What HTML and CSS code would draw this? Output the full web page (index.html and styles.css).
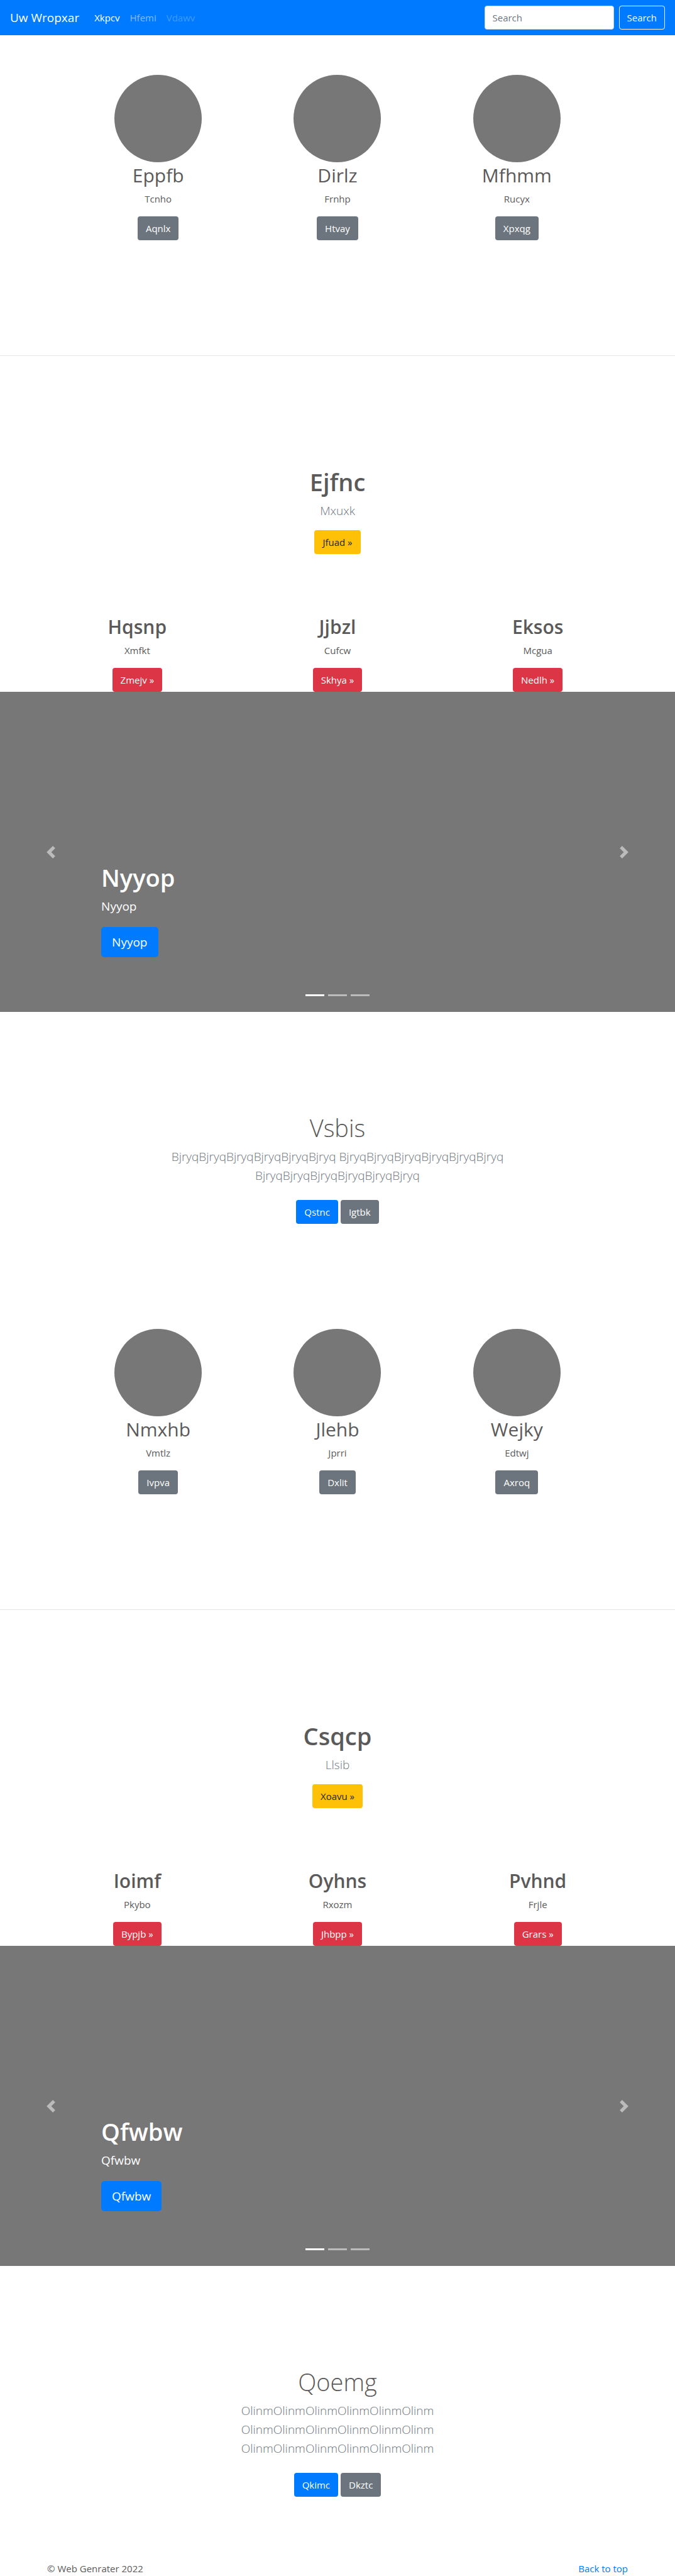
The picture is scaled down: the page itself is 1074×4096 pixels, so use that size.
FILE: index.html
```html
<!DOCTYPE html>
<html lang="en">
<head>
<meta charset="utf-8">
<meta name="viewport" content="width=device-width, initial-scale=1">
<title>Uw Wropxar</title>
<link rel="stylesheet" href="styles.css">
</head>
<body id="top">
<header class="navbar">
  <a class="brand" href="#top">Uw Wropxar</a>
  <nav class="nav">
    <a class="nav-link active" href="#">Xkpcv</a>
    <a class="nav-link" href="#">Hfemi</a>
    <a class="nav-link disabled" href="#" aria-disabled="true">Vdawv</a>
  </nav>
  <form class="search">
    <input class="field" type="search" placeholder="Search" aria-label="Search">
    <button class="btn btn-outline" type="button">Search</button>
  </form>
</header>
<main>
  <section class="profiles">
    <article class="column"><div class="avatar"></div><h2 class="title">Eppfb</h2><p class="text">Tcnho</p><a class="btn btn-secondary" href="#">Aqnlx</a></article>
    <article class="column"><div class="avatar"></div><h2 class="title">Dirlz</h2><p class="text">Frnhp</p><a class="btn btn-secondary" href="#">Htvay</a></article>
    <article class="column"><div class="avatar"></div><h2 class="title">Mfhmm</h2><p class="text">Rucyx</p><a class="btn btn-secondary" href="#">Xpxqg</a></article>
  </section>
  <hr class="divider">
  <section class="intro">
    <h1 class="headline">Ejfnc</h1>
    <p class="lead">Mxuxk</p>
    <a class="btn btn-warning" href="#">Jfuad »</a>
  </section>
  <section class="features">
    <article class="column"><h2 class="title strong">Hqsnp</h2><p class="text">Xmfkt</p><a class="btn btn-danger" href="#">Zmejv »</a></article>
    <article class="column"><h2 class="title strong">Jjbzl</h2><p class="text">Cufcw</p><a class="btn btn-danger" href="#">Skhya »</a></article>
    <article class="column"><h2 class="title strong">Eksos</h2><p class="text">Mcgua</p><a class="btn btn-danger" href="#">Nedlh »</a></article>
  </section>
  <section class="carousel">
    <button class="control prev" type="button" aria-label="Previous"><svg class="chevron" viewBox="0 0 8 8"><path d="M5.25 0l-4 4 4 4 1.5-1.5L4.25 4l2.5-2.5L5.25 0z"/></svg></button>
    <div class="caption">
      <h1 class="headline">Nyyop</h1>
      <p class="caption-text">Nyyop</p>
      <a class="btn btn-primary btn-large" href="#">Nyyop</a>
    </div>
    <div class="indicators"><span class="bar current"></span><span class="bar"></span><span class="bar"></span></div>
    <button class="control next" type="button" aria-label="Next"><svg class="chevron" viewBox="0 0 8 8"><path d="M2.75 0l-1.5 1.5L3.75 4l-2.5 2.5L2.75 8l4-4-4-4z"/></svg></button>
  </section>
  <section class="album">
    <h1 class="headline light">Vsbis</h1>
    <p class="lead">BjryqBjryqBjryqBjryqBjryqBjryq BjryqBjryqBjryqBjryqBjryqBjryq BjryqBjryqBjryqBjryqBjryqBjryq</p>
    <div class="actions"><a class="btn btn-primary" href="#">Qstnc</a><a class="btn btn-secondary" href="#">Igtbk</a></div>
  </section>
  <section class="profiles after-album">
    <article class="column"><div class="avatar"></div><h2 class="title">Nmxhb</h2><p class="text">Vmtlz</p><a class="btn btn-secondary" href="#">Ivpva</a></article>
    <article class="column"><div class="avatar"></div><h2 class="title">Jlehb</h2><p class="text">Jprri</p><a class="btn btn-secondary" href="#">Dxlit</a></article>
    <article class="column"><div class="avatar"></div><h2 class="title">Wejky</h2><p class="text">Edtwj</p><a class="btn btn-secondary" href="#">Axroq</a></article>
  </section>
  <hr class="divider">
  <section class="intro">
    <h1 class="headline">Csqcp</h1>
    <p class="lead">Llsib</p>
    <a class="btn btn-warning" href="#">Xoavu »</a>
  </section>
  <section class="features">
    <article class="column"><h2 class="title strong">Ioimf</h2><p class="text">Pkybo</p><a class="btn btn-danger" href="#">Bypjb »</a></article>
    <article class="column"><h2 class="title strong">Oyhns</h2><p class="text">Rxozm</p><a class="btn btn-danger" href="#">Jhbpp »</a></article>
    <article class="column"><h2 class="title strong">Pvhnd</h2><p class="text">Frjle</p><a class="btn btn-danger" href="#">Grars »</a></article>
  </section>
  <section class="carousel">
    <button class="control prev" type="button" aria-label="Previous"><svg class="chevron" viewBox="0 0 8 8"><path d="M5.25 0l-4 4 4 4 1.5-1.5L4.25 4l2.5-2.5L5.25 0z"/></svg></button>
    <div class="caption">
      <h1 class="headline">Qfwbw</h1>
      <p class="caption-text">Qfwbw</p>
      <a class="btn btn-primary btn-large" href="#">Qfwbw</a>
    </div>
    <div class="indicators"><span class="bar current"></span><span class="bar"></span><span class="bar"></span></div>
    <button class="control next" type="button" aria-label="Next"><svg class="chevron" viewBox="0 0 8 8"><path d="M2.75 0l-1.5 1.5L3.75 4l-2.5 2.5L2.75 8l4-4-4-4z"/></svg></button>
  </section>
  <section class="album">
    <h1 class="headline light">Qoemg</h1>
    <p class="lead">OlinmOlinmOlinmOlinmOlinmOlinm OlinmOlinmOlinmOlinmOlinmOlinm OlinmOlinmOlinmOlinmOlinmOlinm</p>
    <div class="actions"><a class="btn btn-primary" href="#">Qkimc</a><a class="btn btn-secondary" href="#">Dkztc</a></div>
  </section>
</main>
<footer class="footer">
  <span>© Web Genrater 2022</span>
  <a class="footer-link" href="#top">Back to top</a>
</footer>
</body>
</html>
```

FILE: styles.css
```css
*, *::before, *::after { box-sizing: border-box; }

body {
  margin: 0;
  background: #fff;
  color: #5a5a5a;
  font: 400 15px/24px "Open Sans", "Noto Sans", sans-serif;
}

h1, h2, p { margin: 0; }
a { text-decoration: none; }

/* Top bar */
.navbar {
  display: flex;
  align-items: center;
  padding: 9px 16px;
  background: #007bff;
}
.brand { margin-right: 16px; color: #fff; font-size: 19px; line-height: 30px; }
.nav { display: flex; flex: 1; }
.nav-link { padding: 0 8px; color: rgba(255, 255, 255, .5); }
.nav-link.active { color: #fff; }
.nav-link.disabled { color: rgba(255, 255, 255, .25); }
.search { display: flex; gap: 8px; }
.field {
  width: 206px;
  height: 38px;
  padding: 6px 12px;
  border: 1px solid #ced4da;
  border-radius: 4px;
  background: #fff;
  color: #495057;
  font: inherit;
  appearance: none;
}
.field::placeholder { color: #6c757d; opacity: 1; }

/* Buttons */
.btn {
  display: inline-block;
  padding: 6px 12px;
  border: 1px solid transparent;
  border-radius: 4px;
  color: #fff;
  font: inherit;
  text-align: center;
}
.btn-outline { border-color: #f8f9fa; background: transparent; color: #f8f9fa; }
.btn-primary { background: #007bff; }
.btn-secondary { background: #6c757d; }
.btn-danger { background: #dc3545; }
.btn-warning { background: #ffc107; color: #212529; }
.btn-large { padding: 8px 16px; border-radius: 5px; font-size: 19px; line-height: 30px; }

/* Headings and text */
.headline { font-size: 38px; font-weight: 600; line-height: 46px; }
.headline.light { font-weight: 300; }
.title { font-size: 30px; font-weight: 400; line-height: 36px; }
.title.strong { font-weight: 600; }
.text { margin: 7px 0 16px; }
.lead { margin: 8px 0 16px; color: #6c757d; font-size: 19px; font-weight: 300; line-height: 30px; }

/* Three-column rows */
.profiles, .features {
  display: grid;
  grid-template-columns: repeat(3, 1fr);
  margin: 0 auto;
}
.profiles { max-width: 856px; padding-top: 63px; }
.profiles.after-album { padding-top: 167px; }
.features { max-width: 956px; padding-top: 98px; }
.column { display: flex; flex-direction: column; align-items: center; }
.avatar { width: 139px; height: 139px; margin-bottom: 3px; border-radius: 50%; background: #777; }

.divider { margin: 183px 0 0; border: 0; border-top: 1px solid #e5e5e5; }

.intro { padding-top: 177px; display: flex; flex-direction: column; align-items: center; }

/* Carousel */
.carousel { position: relative; height: 509px; background: #777; color: #fff; }
.control {
  position: absolute;
  top: 0;
  bottom: 0;
  display: flex;
  align-items: center;
  justify-content: center;
  width: 15%;
  padding: 0;
  border: 0;
  background: none;
  opacity: .5;
}
.prev { left: 0; }
.next { right: 0; }
.chevron { width: 20px; height: 20px; fill: #fff; }
.caption { position: absolute; right: 15%; bottom: 87px; left: 15%; }
.caption-text { margin: 8px 0 18px; font-size: 19px; line-height: 30px; }
.caption .btn { display: block; width: fit-content; }
.indicators {
  position: absolute;
  right: 0;
  bottom: 25px;
  left: 0;
  display: flex;
  justify-content: center;
  gap: 6px;
}
.bar { width: 30px; height: 3px; background: #fff; opacity: .5; }
.bar.current { opacity: 1; }

/* Album heading */
.album { max-width: 560px; margin: 0 auto; padding-top: 161px; text-align: center; }
.album .lead { margin-bottom: 24px; }
.actions { display: flex; justify-content: center; gap: 4px; }

.footer {
  display: flex;
  justify-content: space-between;
  max-width: 924px;
  margin: 102px auto 0;
}
.footer-link { color: #007bff; }
```
